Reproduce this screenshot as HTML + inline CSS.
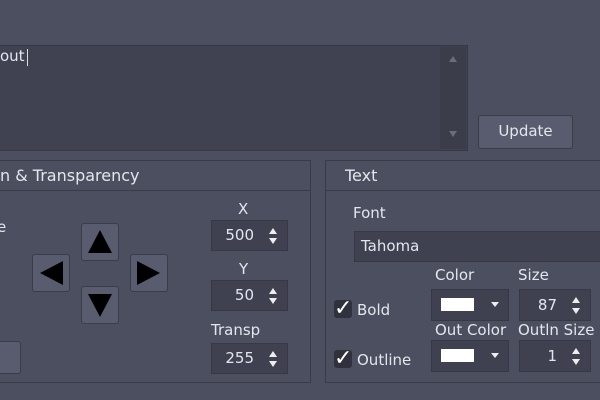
<!DOCTYPE html>
<html><head><style>
body{margin:0;width:600px;height:400px;background:#4c4f60;position:relative;overflow:hidden;font-family:"DejaVu Sans","Liberation Sans",sans-serif;color:#e4e6ee;font-size:15px}
.a{position:absolute}
.in{background:#3f4150;border:1px solid #363845;box-sizing:border-box}
.btn{background:#585c6e;border:1px solid #3a3c48;border-radius:3px;box-sizing:border-box}
.grp{border:1px solid #393b48;box-sizing:border-box}
.spin{text-align:right;padding-right:33px;line-height:29px;font-size:15px}
.ar{position:absolute;right:10px;width:0;height:0;border-left:4px solid transparent;border-right:4px solid transparent}
.cb{width:18px;height:18px;background:#2f313c;border-radius:3px;font-size:22px;line-height:17px;text-align:center;color:#fff;font-weight:bold}
</style></head><body>
<div class="a in" style="left:-2px;top:45px;width:470px;height:106px;background:#404252"></div>
<div class="a" style="left:440px;top:47px;width:26px;height:102px;background:#3b3d4b"></div>
<div class="a" style="left:449px;top:56px;border-left:4px solid transparent;border-right:4px solid transparent;border-bottom:6px solid #6a6d7c"></div>
<div class="a" style="left:449px;top:131px;border-left:4px solid transparent;border-right:4px solid transparent;border-top:6px solid #6a6d7c"></div>
<div class="a" style="left:0;top:47px;font-size:15px">out</div>
<div class="a" style="left:27px;top:49px;width:1px;height:17px;background:#ddd"></div>
<div class="a btn" style="left:478px;top:115px;width:95px;height:34px;line-height:31px;text-align:center">Update</div>

<div class="a grp" style="left:-5px;top:160px;width:316px;height:223px"></div>
<div class="a" style="left:-4px;top:190px;width:314px;height:1px;background:#393b48"></div>
<div class="a" style="left:0;top:166px;font-size:16px">n &amp; Transparency</div>
<div class="a" style="left:-3px;top:218px">e</div>
<div class="a btn" style="left:81px;top:223px;width:38px;height:38px"></div>
<div class="a" style="left:88px;top:230px;border-left:12px solid transparent;border-right:12px solid transparent;border-bottom:23px solid #000"></div>
<div class="a btn" style="left:81px;top:286px;width:38px;height:38px"></div>
<div class="a" style="left:88px;top:294px;border-left:12px solid transparent;border-right:12px solid transparent;border-top:23px solid #000"></div>
<div class="a btn" style="left:32px;top:254px;width:38px;height:38px"></div>
<div class="a" style="left:40px;top:261px;border-top:12px solid transparent;border-bottom:12px solid transparent;border-right:23px solid #000"></div>
<div class="a btn" style="left:130px;top:254px;width:38px;height:38px"></div>
<div class="a" style="left:137px;top:261px;border-top:12px solid transparent;border-bottom:12px solid transparent;border-left:23px solid #000"></div>
<div class="a btn" style="left:-10px;top:341px;width:31px;height:33px"></div>

<div class="a" style="left:238px;top:200px">X</div>
<div class="a in spin" style="left:211px;top:220px;width:77px;height:31px">500<div class="ar" style="top:7px;border-bottom:6px solid #eee"></div><div class="ar" style="top:17px;border-top:6px solid #eee"></div></div>
<div class="a" style="left:239px;top:260px">Y</div>
<div class="a in spin" style="left:211px;top:280px;width:77px;height:31px">50<div class="ar" style="top:7px;border-bottom:6px solid #eee"></div><div class="ar" style="top:17px;border-top:6px solid #eee"></div></div>
<div class="a" style="left:211px;top:321px">Transp</div>
<div class="a in spin" style="left:211px;top:343px;width:77px;height:31px">255<div class="ar" style="top:7px;border-bottom:6px solid #eee"></div><div class="ar" style="top:17px;border-top:6px solid #eee"></div></div>

<div class="a grp" style="left:325px;top:160px;width:290px;height:223px"></div>
<div class="a" style="left:326px;top:190px;width:290px;height:1px;background:#393b48"></div>
<div class="a" style="left:345px;top:166px;font-size:16px">Text</div>
<div class="a" style="left:353px;top:204px">Font</div>
<div class="a in" style="left:354px;top:231px;width:260px;height:31px;padding-left:6px;line-height:29px">Tahoma</div>
<div class="a" style="left:435px;top:266px">Color</div>
<div class="a" style="left:518px;top:266px">Size</div>
<div class="a in" style="left:431px;top:289px;width:78px;height:32px"><div class="a" style="left:9px;top:8px;width:33px;height:13px;background:#fff"></div><div class="a" style="left:59px;top:12px;border-left:4px solid transparent;border-right:4px solid transparent;border-top:5px solid #eee"></div></div>
<div class="a in spin" style="left:519px;top:289px;width:72px;height:32px;line-height:30px">87<div class="ar" style="top:7px;border-bottom:6px solid #eee"></div><div class="ar" style="top:18px;border-top:6px solid #eee"></div></div>
<div class="a" style="left:435px;top:321px">Out Color</div>
<div class="a" style="left:518px;top:321px">Outln Size</div>
<div class="a in" style="left:431px;top:340px;width:78px;height:32px"><div class="a" style="left:9px;top:8px;width:33px;height:13px;background:#fff"></div><div class="a" style="left:59px;top:12px;border-left:4px solid transparent;border-right:4px solid transparent;border-top:5px solid #eee"></div></div>
<div class="a in spin" style="left:519px;top:340px;width:72px;height:32px;line-height:30px">1<div class="ar" style="top:7px;border-bottom:6px solid #eee"></div><div class="ar" style="top:18px;border-top:6px solid #eee"></div></div>
<div class="a cb" style="left:334px;top:300px">✓</div>
<div class="a" style="left:357px;top:301px">Bold</div>
<div class="a cb" style="left:334px;top:350px">✓</div>
<div class="a" style="left:357px;top:351px">Outline</div>
</body></html>
